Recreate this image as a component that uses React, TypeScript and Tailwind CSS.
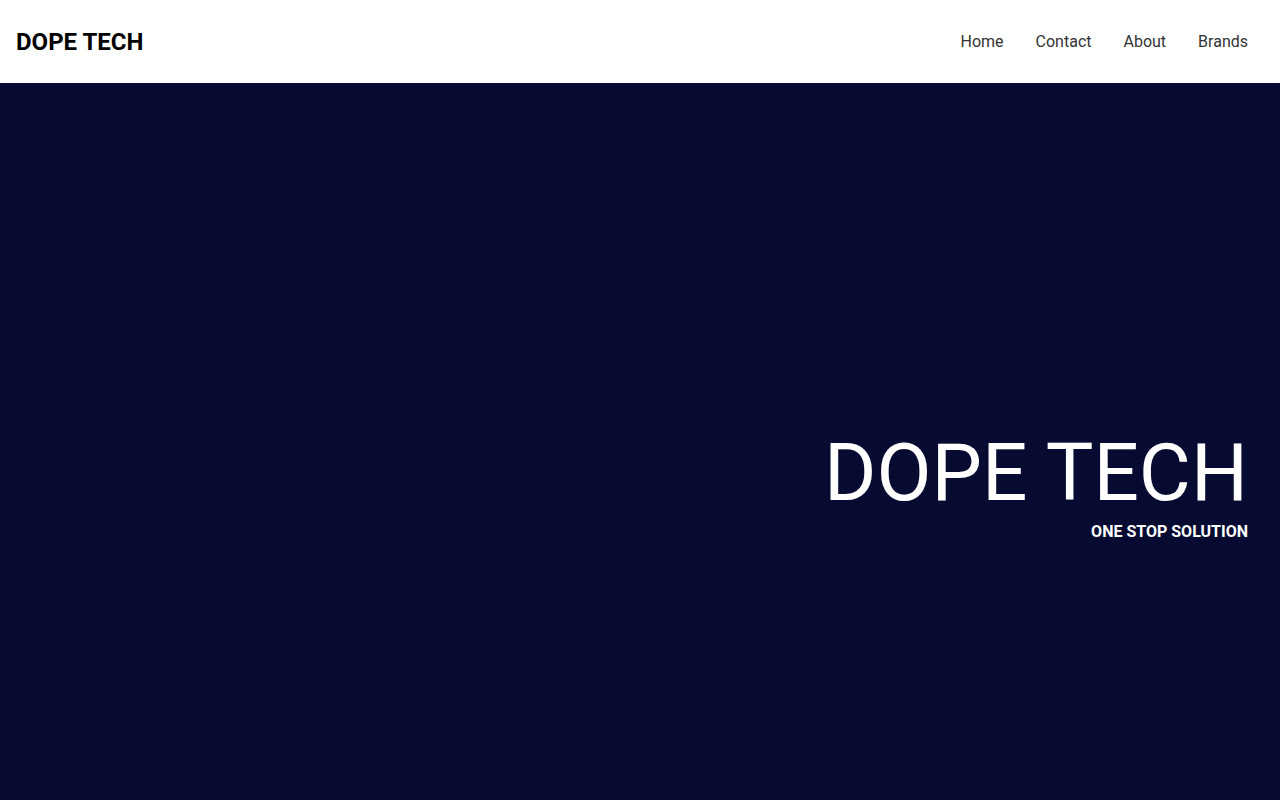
export default function App() {
  const links = ['Home', 'Contact', 'About', 'Brands'];

  return (
    <div className="font-['Roboto',sans-serif] leading-[normal]">
      <header className="flex h-[83px] items-center justify-between bg-white px-4">
        <h1 className="text-2xl font-bold text-black">DOPE TECH</h1>
        <nav className="flex items-center gap-8 pr-4">
          {links.map((link) => (
            <a key={link} href="#" className="text-base text-[#333333]">
              {link}
            </a>
          ))}
        </nav>
      </header>
      <section className="flex h-screen flex-col items-end justify-center bg-[#080b31] px-8 pt-1 text-white">
        <h2 className="text-[80px] font-normal leading-[normal]">DOPE TECH</h2>
        <p className="text-base font-bold">ONE STOP SOLUTION</p>
      </section>
    </div>
  );
}
